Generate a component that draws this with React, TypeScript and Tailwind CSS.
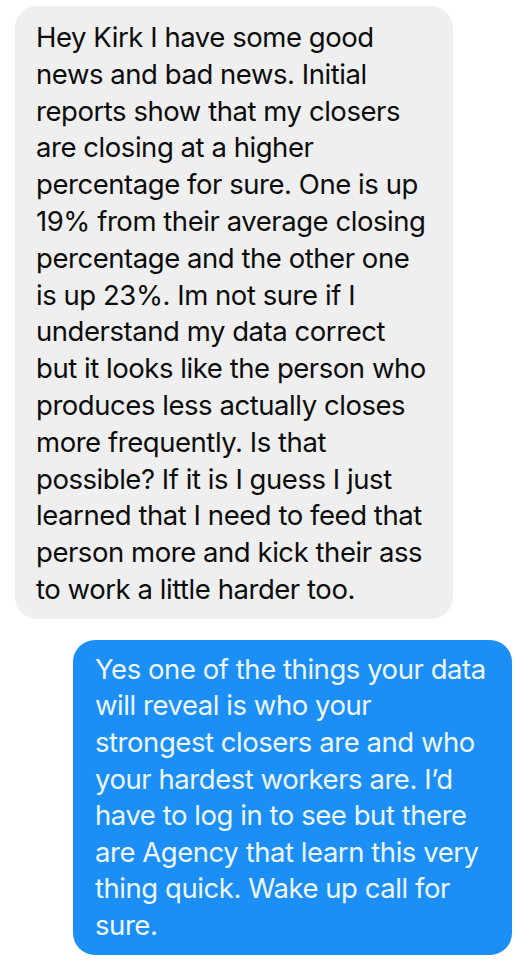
const incoming = [
  'Hey Kirk I have some good',
  'news and bad news. Initial',
  'reports show that my closers',
  'are closing at a higher',
  'percentage for sure. One is up',
  '19% from their average closing',
  'percentage and the other one',
  'is up 23%. Im not sure if I',
  'understand my data correct',
  'but it looks like the person who',
  'produces less actually closes',
  'more frequently. Is that',
  'possible? If it is I guess I just',
  'learned that I need to feed that',
  'person more and kick their ass',
  'to work a little harder too.',
]

const outgoing = [
  'Yes one of the things your data',
  'will reveal is who your',
  'strongest closers are and who',
  'your hardest workers are. I\u2019d',
  'have to log in to see but there',
  'are Agency that learn this very',
  'thing quick. Wake up call for',
  'sure.',
]

export default function App() {
  return (
    <div className="w-[515px] h-[960px] bg-white overflow-hidden pt-[6px] font-['Inter',sans-serif]">
      <div className="ml-[15px] w-[438px] rounded-[22px] bg-[#efefef] px-[21px] pt-[13px] pb-[11px] text-[27.5px] leading-[36.8px] tracking-[-0.45px] text-[#0d0d0d]">
        {incoming.map((line) => (
          <div key={line} className="whitespace-nowrap">{line}</div>
        ))}
      </div>
      <div className="mt-[21px] ml-[73px] w-[439px] rounded-[22px] bg-[#1b8ff5] px-[22px] pt-[11px] pb-[11px] text-[27.5px] leading-[36.6px] tracking-[-0.45px] text-[#eef7ff]">
        {outgoing.map((line) => (
          <div key={line} className="whitespace-nowrap">{line}</div>
        ))}
      </div>
    </div>
  )
}
